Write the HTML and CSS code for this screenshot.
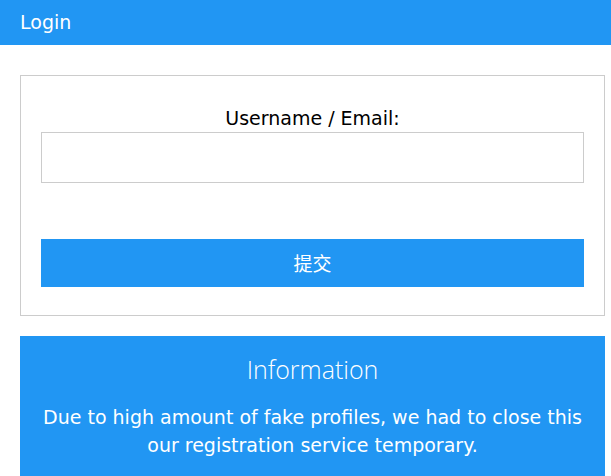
FILE: index.html
```html
<!DOCTYPE html>
<html>
<head>
<meta charset="utf-8">
<link rel="stylesheet" href="styles.css">
</head>
<body>
<header class="topbar">Login</header>
<main class="page">
  <form class="login-box">
    <label class="field-label" for="user">Username / Email:</label>
    <input class="field-input" id="user" type="text">
    <button class="submit-btn" type="button">提交</button>
  </form>
  <section class="info-panel">
    <h2 class="info-title">Information</h2>
    <p class="info-text">Due to high amount of fake profiles, we had to close this our registration service temporary.</p>
  </section>
</main>
</body>
</html>
```

FILE: styles.css
```css
html, body {
  margin: 0;
  padding: 0;
  background: #fff;
  font-family: "DejaVu Sans", Verdana, sans-serif;
  color: #000;
}
.topbar {
  background: #2196F3;
  color: #fff;
  height: 45px;
  line-height: 45px;
  padding-left: 20px;
  font-size: 19px;
}
.page {
  width: 585px;
  margin: 30px 0 0 20px;
}
.login-box {
  border: 1px solid #ccc;
  padding: 31px 20px 28px;
  display: flex;
  flex-direction: column;
  align-items: stretch;
}
.field-label {
  text-align: center;
  font-size: 19px;
  line-height: 23px;
  margin-bottom: 2px;
}
.field-input {
  box-sizing: border-box;
  height: 51px;
  border: 1px solid #ccc;
  margin: 0;
  padding: 8px;
  font-size: 16px;
}
.submit-btn {
  margin-top: 56px;
  height: 48px;
  padding: 0 0 2px;
  border: none;
  background: #2196F3;
  color: #fff;
  font-family: "DejaVu Sans", "Noto Sans CJK SC", sans-serif;
  font-size: 19px;
}
.info-panel {
  margin-top: 20px;
  background: #2196F3;
  color: #fff;
  text-align: center;
  padding: 16px 16px 20px;
}
.info-title {
  margin: 0;
  font-family: "Open Sans", sans-serif;
  font-weight: 300;
  font-size: 25px;
  line-height: 34px;
}
.info-text {
  margin: 17px 0 0;
  font-size: 19px;
  line-height: 28px;
}
```
